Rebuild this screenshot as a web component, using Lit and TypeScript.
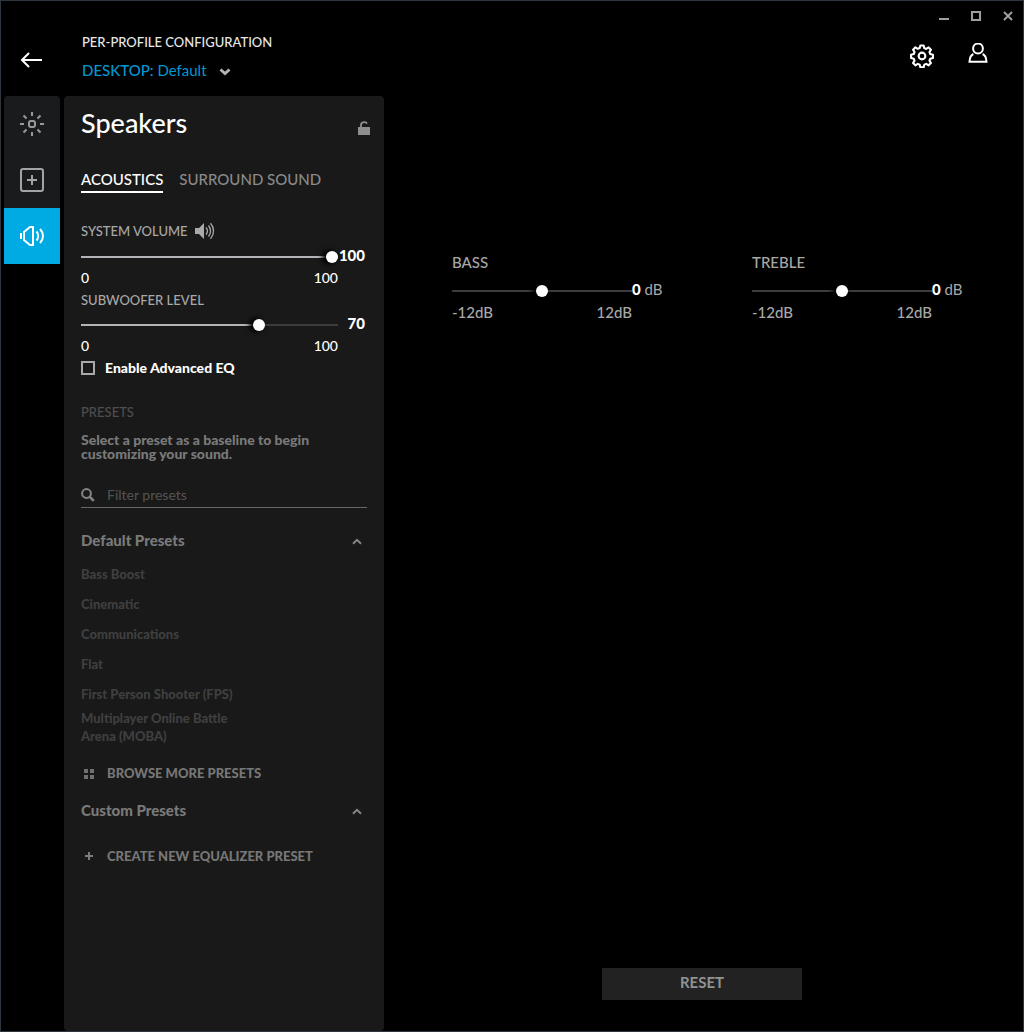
import { LitElement, html, svg, css } from "lit";
import { customElement, property, state } from "lit/decorators.js";
import { classMap } from "lit/directives/class-map.js";

const sharedStyles = css`
  :host {
    font-family: Lato, "Open Sans", sans-serif;
  }
  *,
  *::before,
  *::after {
    box-sizing: border-box;
  }
  button {
    display: inline-flex;
    align-items: center;
    justify-content: center;
    margin: 0;
    padding: 0;
    border: 0;
    background: none;
    color: inherit;
    font: inherit;
    cursor: pointer;
  }
  svg {
    display: block;
    flex: none;
  }
  .label {
    display: flex;
    align-items: center;
    gap: 7px;
    color: #a8a8a8;
    font-size: 13px;
    font-weight: 500;
    line-height: 20px;
  }
`;

const icons = {
  minimize: svg`<svg width="32" height="32" viewBox="0 0 32 32" fill="#a0a0a0"><path d="M11 18h10v2H11z" /></svg>`,
  maximize: svg`<svg width="32" height="32" viewBox="0 0 32 32" fill="none" stroke="#a0a0a0" stroke-width="2"><path d="M12 12h8v8h-8z" /></svg>`,
  close: svg`<svg width="32" height="32" viewBox="0 0 32 32" fill="none" stroke="#a0a0a0" stroke-width="2"><path d="M12 12l8 8M20 12l-8 8" /></svg>`,
  back: svg`<svg width="24" height="24" viewBox="0 0 24 24" fill="none" stroke="#fff" stroke-width="2"><path d="M2 12h20M9 5l-7 7 7 7" /></svg>`,
  down: svg`<svg width="12" height="12" viewBox="0 -4 12 12" fill="none" stroke="#b4b4b4" stroke-width="3"><path d="M1.500 1.500L6 5.500l4.500-4" /></svg>`,
  gear: svg`<svg width="24" height="24" viewBox="0.500 0.500 25 25" fill="none" stroke="#fff" stroke-width="2.200" stroke-linejoin="round"><circle cx="13" cy="13" r="3.500" /><path d="M11.300 2h3.400l.7 2.800 2 .8 2.500-1.500 2.400 2.400-1.500 2.500.8 2 2.800.7v3.400l-2.800.7-.8 2 1.500 2.500-2.400 2.400-2.500-1.500-2 .8-.7 2.800h-3.400l-.7-2.800-2-.8-2.500 1.500-2.400-2.400 1.500-2.500-.8-2L1.600 15v-3.400l2.800-.7.8-2-1.500-2.500 2.400-2.400 2.500 1.500 2-.8z" /></svg>`,
  user: svg`<svg width="20" height="26" viewBox="0 1 20 26" fill="none" stroke="#fff" stroke-width="2"><circle cx="10" cy="6.500" r="4.900" /><path d="M5.400 12C3 13 1.700 16 1.500 19.700h17C18.300 16 17 13 14.600 12" /></svg>`,
  light: svg`<svg width="24" height="24" viewBox="0 0 24 24" fill="none" stroke="#999" stroke-width="2"><rect x="9" y="9" width="6" height="6" rx="2" /><path d="M12 0v4M12 20v4M0 12h4M20 12h4M3.500 3.500l3 3M17.500 17.500l3 3M3.500 20.500l3-3M17.500 6.500l3-3" /></svg>`,
  plusBox: svg`<svg width="24" height="24" viewBox="0 0 24 24" fill="none" stroke="#a4a4a4" stroke-width="2"><rect x="1" y="1" width="22" height="22" rx="2" /><path d="M12 7v10M7 12h10" /></svg>`,
  speaker: svg`<svg width="24" height="24" viewBox="0 0 24 24" fill="none" stroke="#fff" stroke-width="2"><path d="M1 9v6M4 8v8l6 5h3V3h-3L4 8z" /><path d="M16.500 7.500c2.200 2.600 2.200 6.400 0 9M20 5c4 4.200 4 9.800 0 14" /></svg>`,
  unlock: svg`<svg width="12" height="14" viewBox="0 0 12 14"><path d="M0 6h12v8H0z" fill="#8e8e8e" /><path d="M3 7V4c0-3.300 5-4 6-1.200" fill="none" stroke="#8e8e8e" stroke-width="1.800" /></svg>`,
  sound: svg`<svg width="20" height="22" viewBox="0 0 20 22"><path d="M0 8h4l5-5v16l-5-5H0z" fill="#a9a9ac" /><path d="M11 7.500c1.700 2 1.700 5 0 7M13.500 5.500c2.700 3.200 2.700 7.800 0 11M15.500 3.300c4 4.400 4 11 0 15.400" fill="none" stroke="#a9a9ac" stroke-width="1.300" /></svg>`,
  search: svg`<svg width="14" height="14" viewBox="0 0 14 14" fill="none" stroke="#858585" stroke-width="2"><circle cx="5.500" cy="5.500" r="4.400" /><path d="M8.800 8.800l4 4" stroke-width="2.600" /></svg>`,
  up: svg`<svg width="10" height="9" viewBox="0 -2 10 9" fill="none" stroke="#858585" stroke-width="2"><path d="M1 5.800l4-4 4 4" /></svg>`,
  grid: svg`<svg width="10" height="12" viewBox="0 -2 10 12" fill="#707070"><path d="M0 0h4v4H0zM6 0h4v4H6zM0 6h4v4H0zM6 6h4v4H6z" /></svg>`,
  plus: svg`<svg width="10" height="8" viewBox="0 0 10 8" fill="none" stroke="#7c7c7c" stroke-width="2"><path d="M5 0v8M1 4h8" /></svg>`,
};

@customElement("level-slider")
export class LevelSlider extends LitElement {
  @property() label = "";
  @property() unit = "";
  @property({ type: Number }) min = 0;
  @property({ type: Number }) max = 100;
  @property({ type: Number }) value = 0;
  @property({ type: Boolean, reflect: true }) equalizer = false;
  @property({ type: Boolean }) icon = false;

  static styles = [
    sharedStyles,
    css`
      :host {
        display: block;
        --fill: #b4b4b8;
        --value-width: 27px;
        --row-gap: 5px;
        --scale: #fff;
      }
      :host([equalizer]) {
        --fill: #3c3c3c;
        --value-width: 30px;
        --row-gap: 9px;
        --scale: #a8a8a8;
      }
      :host([equalizer]) .label,
      :host([equalizer]) .scale {
        font-size: 15px;
      }
      .row {
        display: grid;
        grid-template-columns: 1fr var(--value-width);
        height: 20px;
        margin-top: var(--row-gap);
      }
      .range {
        width: 100%;
        height: 20px;
        margin: 0;
        background: transparent;
        appearance: none;
        -webkit-appearance: none;
      }
      .range::-webkit-slider-runnable-track {
        height: 2px;
        background: linear-gradient(to right, var(--fill) var(--level), #3c3c3c var(--level));
      }
      .range::-webkit-slider-thumb {
        width: 12px;
        height: 12px;
        margin-top: -5px;
        border-radius: 50%;
        background: #fff;
        box-shadow: -3px 0 5px 1px #000;
        -webkit-appearance: none;
      }
      .value {
        color: #a8a8a8;
        font-size: 15px;
        line-height: 16px;
        text-align: right;
        white-space: nowrap;
      }
      .number {
        color: #fff;
        font-weight: 900;
      }
      .scale {
        display: flex;
        justify-content: space-between;
        margin: 1px var(--value-width) 0 0;
        color: var(--scale);
        font-size: 14px;
        font-weight: 500;
        line-height: 20px;
      }
    `,
  ];

  private onInput(event: Event) {
    this.value = Number((event.target as HTMLInputElement).value);
  }

  render() {
    const level = ((this.value - this.min) / (this.max - this.min)) * 100;
    return html`
      <label class="label" for="range">${this.label}${this.icon ? icons.sound : ""}</label>
      <div class="row">
        <input
          class="range"
          id="range"
          type="range"
          min=${this.min}
          max=${this.max}
          .value=${String(this.value)}
          style="--level: ${level}%"
          @input=${this.onInput}
        />
        <output class="value" for="range"
          ><span class="number">${this.value}</span>${this.unit ? ` ${this.unit}` : ""}</output
        >
      </div>
      <div class="scale"><span>${this.min}${this.unit}</span><span>${this.max}${this.unit}</span></div>
    `;
  }
}

@customElement("preset-browser")
export class PresetBrowser extends LitElement {
  @state() private filter = "";

  private presets = [
    "Bass Boost",
    "Cinematic",
    "Communications",
    "Flat",
    "First Person Shooter (FPS)",
    "Multiplayer Online Battle Arena (MOBA)",
  ];

  static styles = [
    sharedStyles,
    css`
      :host {
        display: block;
        color: #7a7a7a;
      }
      .heading {
        margin: 0;
        color: #4e4e4e;
        font-size: 13px;
        font-weight: 500;
        line-height: 20px;
      }
      .hint {
        margin: 11px 0 0;
        font-size: 14px;
        font-weight: 900;
        line-height: 14px;
      }
      .search {
        display: flex;
        align-items: center;
        gap: 12px;
        height: 26px;
        margin-top: 21px;
        border-bottom: 1px solid #666;
      }
      .filter {
        flex: 1;
        min-width: 0;
        padding: 0;
        border: 0;
        outline: 0;
        background: none;
        color: #aaa;
        font: 14px/20px Lato, sans-serif;
      }
      .filter::placeholder {
        color: #545454;
      }
      .group {
        display: flex;
        justify-content: space-between;
        width: 100%;
        padding-right: 5px;
        font-size: 15px;
        font-weight: 900;
        line-height: 20px;
      }
      .group.first {
        margin-top: 22px;
      }
      .list {
        max-width: 176px;
        margin: 9px 0 0;
        padding: 0;
        list-style: none;
      }
      .preset {
        justify-content: flex-start;
        min-height: 30px;
        color: #3f3f3f;
        font-size: 13px;
        font-weight: 900;
        line-height: 18px;
        text-align: left;
      }
      .action {
        gap: 13px;
        padding-left: 3px;
        color: #777;
        font-size: 13px;
        font-weight: 900;
        line-height: 20px;
      }
      .browse {
        margin: 18px 0 17px;
      }
      .create {
        margin-top: 26px;
      }
      li {
        display: flex;
      }
    `,
  ];

  render() {
    const query = this.filter.toLowerCase();
    const shown = this.presets.filter((name) => name.toLowerCase().includes(query));
    return html`
      <h2 class="heading">PRESETS</h2>
      <p class="hint">Select a preset as a baseline to begin customizing your sound.</p>
      <label class="search">
        ${icons.search}
        <input
          class="filter"
          type="text"
          placeholder="Filter presets"
          aria-label="Filter presets"
          @input=${(e: Event) => (this.filter = (e.target as HTMLInputElement).value)}
        />
      </label>
      <button class="group first" aria-expanded="true">Default Presets ${icons.up}</button>
      <ul class="list">
        ${shown.map((name) => html`<li><button class="preset">${name}</button></li>`)}
      </ul>
      <button class="action browse">${icons.grid} BROWSE MORE PRESETS</button>
      <button class="group" aria-expanded="true">Custom Presets ${icons.up}</button>
      <button class="action create">${icons.plus} CREATE NEW EQUALIZER PRESET</button>
    `;
  }
}

@customElement("app-root")
export class AppRoot extends LitElement {
  @state() private tab = "ACOUSTICS";

  static styles = [
    sharedStyles,
    css`
      :host {
        display: block;
        color: #fff;
        background: #000;
      }
      .window {
        display: flex;
        flex-direction: column;
        min-height: 100vh;
        outline: 1px solid #30363e;
        outline-offset: -1px;
      }
      .titlebar {
        display: flex;
        justify-content: flex-end;
        height: 32px;
      }
      .toolbar {
        display: flex;
        align-items: flex-start;
        height: 64px;
        padding: 0 18px 0 4px;
      }
      .back {
        width: 56px;
        height: 56px;
      }
      .profile {
        display: flex;
        flex: 1;
        flex-direction: column;
        align-items: flex-start;
        gap: 8px;
        margin-left: 22px;
        line-height: 20px;
      }
      .caption {
        margin: 0;
        color: #e8e8e8;
        font-size: 13px;
        font-weight: 500;
      }
      .switch {
        gap: 12px;
        color: #0098d0;
        font-size: 15px;
      }
      .kind {
        font-weight: 500;
      }
      .tool {
        width: 56px;
        height: 48px;
      }
      .body {
        display: flex;
        flex: 1;
        align-items: stretch;
        gap: 4px;
        padding-left: 4px;
      }
      .rail {
        display: flex;
        flex: none;
        flex-direction: column;
        align-self: flex-start;
        width: 56px;
        border-radius: 4px 4px 0 0;
        background: #1a1b1d;
      }
      .rail-item {
        height: 56px;
      }
      .rail-item.active {
        background: #00abe3;
      }
      .panel {
        flex: none;
        width: 320px;
        margin-bottom: 1px;
        padding: 12px 17px 24px;
        border-radius: 4px;
        background: #191919;
      }
      .panel-head {
        display: flex;
        align-items: center;
        justify-content: space-between;
        margin-right: -3px;
      }
      .title {
        margin: 0;
        font-size: 27px;
        font-weight: 500;
        line-height: 30px;
      }
      .lock {
        height: 24px;
        padding-top: 9px;
      }
      .tabs {
        display: flex;
        gap: 16px;
        margin: 30px 0 27px;
      }
      .tab {
        padding-bottom: 1px;
        border-bottom: 2px solid transparent;
        color: #8a8a8a;
        font-size: 15px;
        font-weight: 500;
        line-height: 22px;
      }
      .tab.active {
        border-color: #fff;
        color: #fff;
      }
      .sliders {
        display: flex;
        flex-direction: column;
        gap: 2px;
        margin-right: 2px;
      }
      .check {
        display: flex;
        align-items: center;
        gap: 10px;
        margin: 2px 0 24px;
        font-size: 14px;
        font-weight: 900;
        line-height: 20px;
      }
      .box {
        width: 14px;
        height: 14px;
        margin: 0;
        border: 2px solid #a9a9ac;
        appearance: none;
        -webkit-appearance: none;
      }
      .box:checked {
        background: #00abe3;
      }
      .content {
        display: flex;
        flex: 1;
        flex-direction: column;
        justify-content: space-between;
        min-width: 0;
        padding: 156px 8px 32px 0;
      }
      .equalizer {
        display: grid;
        grid-template-columns: repeat(2, minmax(0, 210px));
        gap: 90px;
        padding: 0 54px 0 64px;
      }
      .reset {
        align-self: center;
        width: 200px;
        height: 32px;
        padding-bottom: 4px;
        background: #222;
        color: #929292;
        font-size: 15px;
        font-weight: 700;
      }
    `,
  ];

  render() {
    return html`
      <div class="window">
        <header>
          <div class="titlebar">
            <button aria-label="Minimize">${icons.minimize}</button>
            <button aria-label="Maximize">${icons.maximize}</button>
            <button aria-label="Close">${icons.close}</button>
          </div>
          <div class="toolbar">
            <button class="back" aria-label="Back">${icons.back}</button>
            <div class="profile">
              <p class="caption">PER-PROFILE CONFIGURATION</p>
              <button class="switch" aria-haspopup="listbox">
                <span><span class="kind">DESKTOP:</span> Default</span>${icons.down}
              </button>
            </div>
            <button class="tool" aria-label="Settings">${icons.gear}</button>
            <button class="tool" aria-label="Account">${icons.user}</button>
          </div>
        </header>
        <div class="body">
          <nav class="rail" aria-label="Device">
            <button class="rail-item" aria-label="Lighting">${icons.light}</button>
            <button class="rail-item" aria-label="Assignments">${icons.plusBox}</button>
            <button class="rail-item active" aria-label="Speakers">${icons.speaker}</button>
          </nav>
          <section class="panel">
            <div class="panel-head">
              <h1 class="title">Speakers</h1>
              <button class="lock" aria-label="Lock profile">${icons.unlock}</button>
            </div>
            <div class="tabs" role="tablist">
              ${["ACOUSTICS", "SURROUND SOUND"].map(
                (name) => html`<button
                  role="tab"
                  aria-selected=${name === this.tab ? "true" : "false"}
                  class=${classMap({ tab: true, active: name === this.tab })}
                  @click=${() => (this.tab = name)}
                >
                  ${name}
                </button>`
              )}
            </div>
            <div class="sliders">
              <level-slider label="SYSTEM VOLUME" icon .value=${100}></level-slider>
              <level-slider label="SUBWOOFER LEVEL" .value=${70}></level-slider>
            </div>
            <label class="check"><input class="box" type="checkbox" />Enable Advanced EQ</label>
            <preset-browser></preset-browser>
          </section>
          <main class="content">
            <div class="equalizer">
              <level-slider equalizer label="BASS" unit="dB" .min=${-12} .max=${12} .value=${0}></level-slider>
              <level-slider equalizer label="TREBLE" unit="dB" .min=${-12} .max=${12} .value=${0}></level-slider>
            </div>
            <button class="reset">RESET</button>
          </main>
        </div>
      </div>
    `;
  }
}
